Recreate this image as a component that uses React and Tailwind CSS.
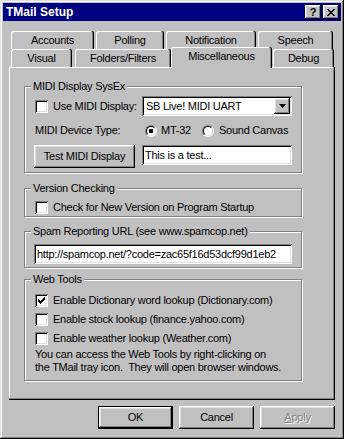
import React from "react";

// win95 bevels
const raised =
  "shadow-[inset_-1px_-1px_0_#000,inset_1px_1px_0_#fff,inset_-2px_-2px_0_#808080,inset_2px_2px_0_#dfdfdf]";
const sunken =
  "shadow-[inset_1px_1px_0_#808080,inset_-1px_-1px_0_#fff,inset_2px_2px_0_#000,inset_-2px_-2px_0_#dfdfdf]";
const tabEdge =
  "shadow-[inset_-1px_0_0_#000,inset_-2px_0_0_#808080,inset_1px_1px_0_#fff]";

const Checkbox = ({ checked }) => (
  <div
    className={`w-[13px] h-[13px] shrink-0 bg-white ${sunken} flex items-center justify-center`}
  >
    {checked && (
      <svg width="7" height="7" viewBox="0 0 7 7" shapeRendering="crispEdges">
        {[2, 3, 4, 3, 2, 1, 0].map((y, x) => (
          <rect key={x} x={x} y={y} width="1" height="3" fill="#000" />
        ))}
      </svg>
    )}
  </div>
);

const Radio = ({ checked }) => (
  <div className="w-[12px] h-[12px] shrink-0 rounded-full border border-t-[#808080] border-l-[#808080] border-b-white border-r-white">
    <div className="w-full h-full rounded-full border border-t-black border-l-black border-b-[#dfdfdf] border-r-[#dfdfdf] bg-white flex items-center justify-center">
      {checked && <div className="w-[4px] h-[4px] rounded-[1px] bg-black" />}
    </div>
  </div>
);

const Group = ({ title, className, children }) => (
  <div
    className={`w-[278px] flex flex-col border border-[#808080] shadow-[1px_1px_0_#fff,inset_1px_1px_0_#fff] ${className}`}
  >
    <div className="-mt-[7px] ml-[6px] self-start h-[13px] px-[2px] bg-[#c0c0c0]">
      {title}
    </div>
    {children}
  </div>
);

const Tab = ({ label, className }) => (
  <div
    className={`h-[18px] rounded-t-[2px] ${tabEdge} flex items-center justify-center ${className}`}
  >
    {label}
  </div>
);

const CheckRow = ({ checked, label, className }) => (
  <div className={`flex items-center h-[13px] pl-[10px] ${className}`}>
    <Checkbox checked={checked} />
    <span className="ml-[5px] whitespace-nowrap">{label}</span>
  </div>
);

export default function App() {
  return (
    <div className="w-[344px] h-[439px] bg-[#c0c0c0] p-[3px] font-['Liberation_Sans',Arial,sans-serif] text-[11px] leading-[13px] tracking-[-0.25px] text-black select-none shadow-[inset_-1px_-1px_0_#000,inset_1px_1px_0_#dfdfdf,inset_-2px_-2px_0_#808080,inset_2px_2px_0_#fff]">
      {/* title bar */}
      <div className="h-[18px] bg-[#000080] flex items-center pl-[3px] pr-[2px]">
        <span className="flex-1 text-white font-bold text-[12px] tracking-normal">
          TMail Setup
        </span>
        <div
          className={`w-[16px] h-[14px] bg-[#c0c0c0] ${raised} flex items-center justify-center font-bold text-[11px] leading-none tracking-normal pt-[1px]`}
        >
          ?
        </div>
        <div
          className={`ml-[2px] w-[16px] h-[14px] bg-[#c0c0c0] ${raised} flex items-center justify-center`}
        >
          <svg width="8" height="7" viewBox="0 0 8 7" shapeRendering="crispEdges">
            <path
              d="M0 0h2v1H0zM6 0h2v1H6zM1 1h2v1H1zM5 1h2v1H5zM2 2h4v1H2zM3 3h2v1H3zM2 4h4v1H2zM1 5h2v1H1zM5 5h2v1H5zM0 6h2v1H0zM6 6h2v1H6z"
              fill="#000"
            />
          </svg>
        </div>
      </div>

      <div className="mt-[10px] ml-[6px] w-[326px]">
        {/* back tab row */}
        <div className="flex h-[18px] pl-[2px] gap-[2px]">
          <Tab label="Accounts" className="w-[83px]" />
          <Tab label="Polling" className="w-[68px]" />
          <Tab label="Notification" className="w-[90px]" />
          <Tab label="Speech" className="w-[75px]" />
        </div>
        {/* front tab row */}
        <div className="flex h-[18px] items-end pl-[2px]">
          <Tab label="Visual" className="w-[61px]" />
          <Tab label="Folders/Filters" className="ml-[3px] w-[96px]" />
          <div
            className={`relative z-10 w-[101px] h-[21px] -mb-[1px] bg-[#c0c0c0] rounded-t-[2px] ${tabEdge} flex justify-center pt-[3px]`}
          >
            Miscellaneous
          </div>
          <Tab label="Debug" className="ml-[1px] w-[61px]" />
        </div>

        {/* page */}
        <div className="h-[333px] pl-[15px] pt-[19px] flex flex-col shadow-[inset_-1px_-1px_0_#000,inset_-2px_-2px_0_#808080,inset_1px_1px_0_#fff]">
          <Group title="MIDI Display SysEx" className="pb-[4px]">
            <div className="mt-[3px] h-[20px] flex items-center pl-[10px] pr-[9px]">
              <Checkbox />
              <span className="ml-[5px] flex-1 whitespace-nowrap">Use MIDI Display:</span>
              <div className={`w-[150px] h-[20px] bg-white ${sunken} flex items-center p-[2px]`}>
                <span className="flex-1 pl-[2px] whitespace-nowrap">SB Live! MIDI UART</span>
                <div
                  className={`w-[16px] h-[16px] bg-[#c0c0c0] ${raised} flex items-center justify-center`}
                >
                  <svg width="7" height="4" viewBox="0 0 7 4">
                    <path d="M0 0h7L3.5 4z" fill="#000" />
                  </svg>
                </div>
              </div>
            </div>
            <div className="h-[29px] flex items-center pl-[10px] pr-[9px]">
              <span className="flex-1 whitespace-nowrap">MIDI Device Type:</span>
              <div className="w-[150px] flex items-center pl-[3px]">
                <div className="w-[57px] flex items-center">
                  <Radio checked />
                  <span className="ml-[4px]">MT-32</span>
                </div>
                <Radio />
                <span className="ml-[5px] whitespace-nowrap">Sound Canvas</span>
              </div>
            </div>
            <div className="h-[23px] flex items-start pl-[9px] pr-[9px]">
              <div
                className={`w-[101px] h-[23px] ${raised} flex items-center justify-center whitespace-nowrap`}
              >
                Test MIDI Display
              </div>
              <div
                className={`ml-auto w-[150px] h-[20px] bg-white ${sunken} flex items-center pl-[3px]`}
              >
                This is a test...
              </div>
            </div>
          </Group>

          <Group title="Version Checking" className="mt-[15px] pb-[2px]">
            <CheckRow label="Check for New Version on Program Startup" className="mt-[6px]" />
          </Group>

          <Group title="Spam Reporting URL (see www.spamcop.net)" className="mt-[14px] pb-[3px]">
            <div
              className={`mt-[6px] ml-[9px] w-[258px] h-[20px] bg-white ${sunken} flex items-center pl-[3px] pr-[2px] overflow-hidden whitespace-nowrap`}
            >
              http://spamcop.net/?code=zac65f16d53dcf99d1eb2
            </div>
          </Group>

          <Group title="Web Tools" className="mt-[11px] pb-[6px]">
            <CheckRow checked label="Enable Dictionary word lookup (Dictionary.com)" className="mt-[8px]" />
            <CheckRow label="Enable stock lookup (finance.yahoo.com)" className="mt-[6px]" />
            <CheckRow label="Enable weather lookup (Weather.com)" className="mt-[6px]" />
            <p className="mt-[3px] pl-[10px] whitespace-pre">
              {"You can access the Web Tools by right-clicking on\nthe TMail tray icon.  They will open browser windows."}
            </p>
          </Group>
        </div>

        {/* dialog buttons */}
        <div className="mt-[6px] flex justify-end gap-[6px]">
          <div className="w-[75px] h-[23px] border border-black">
            <div className={`w-full h-full ${raised} flex items-center justify-center`}>OK</div>
          </div>
          <div className={`w-[75px] h-[23px] ${raised} flex items-center justify-center`}>
            Cancel
          </div>
          <div
            className={`w-[75px] h-[23px] ${raised} flex items-center justify-center text-[#808080] [text-shadow:1px_1px_0_#fff]`}
          >
            <span>
              <span className="underline">A</span>pply
            </span>
          </div>
        </div>
      </div>
    </div>
  );
}
